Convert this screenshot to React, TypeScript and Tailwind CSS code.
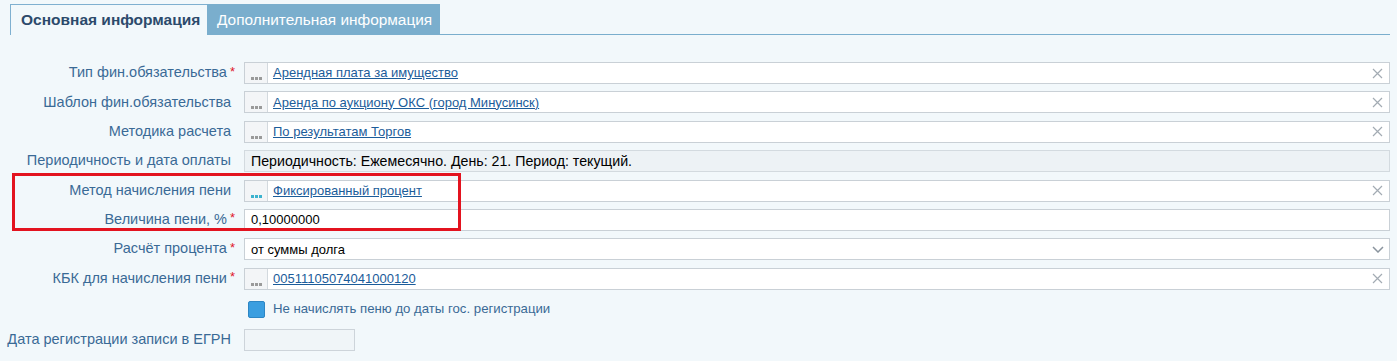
import React from "react";

const F = { fontFamily: '"Liberation Sans", Arial, sans-serif' };

function Dots({ active = false }: { active?: boolean }) {
  const c = active ? "bg-[#3bb3cf]" : "bg-[#9a9a9a]";
  return (
    <div className="flex h-full w-[23px] shrink-0 items-end justify-center border-r border-[#d3d9de] bg-[#f3f5f7] pb-[3px]">
      <div className="flex gap-[1px]">
        <span className={`block h-[3px] w-[3px] ${c}`} />
        <span className={`block h-[3px] w-[3px] ${c}`} />
        <span className={`block h-[3px] w-[3px] ${c}`} />
      </div>
    </div>
  );
}

function XIcon() {
  return (
    <svg width="11" height="11" viewBox="0 0 11 11" className="mr-[6px] shrink-0">
      <path d="M1 1 L10 10 M10 1 L1 10" stroke="#a3abb3" strokeWidth="1.2" fill="none" />
    </svg>
  );
}

function Chevron() {
  return (
    <div className="flex h-full w-[22px] shrink-0 items-center justify-center">
      <svg width="12" height="7" viewBox="0 0 12 7">
        <path d="M1 1 L6 6 L11 1" stroke="#8a949e" strokeWidth="1.5" fill="none" />
      </svg>
    </div>
  );
}

function Label({ text, req = false }: { text: string; req?: boolean }) {
  return (
    <div className="flex w-[234px] shrink-0 items-center justify-end whitespace-nowrap pr-[13px] text-[14.5px] text-[#3a6a96]">
      <span>{text}</span>
      {req ? <span className="ml-[3px] -mr-[4px] -mt-[4px] text-[13px] leading-none text-[#e0182a]">*</span> : null}
    </div>
  );
}

function LookupRow({ label, req, value, active }: { label: string; req?: boolean; value: string; active?: boolean }) {
  return (
    <div className="flex h-[22px] items-center">
      <Label text={label} req={req} />
      <div className="flex h-[22px] flex-1 items-center border border-[#c9d0d6] bg-white">
        <Dots active={active} />
        <a className="ml-[5px] flex-1 text-[13px] text-[#1b5c9a] underline" href="#">
          {value}
        </a>
        <XIcon />
      </div>
    </div>
  );
}

export default function App() {
  return (
    <div style={F} className="relative h-[361px] w-[1397px] overflow-hidden bg-[#f2f8fb] pl-[10px] pr-[7px] pt-[4px]">
      {/* tabs */}
      <div className="flex h-[31px] items-stretch">
        <div className="flex w-[197px] items-center border-l border-t border-[#7fb0d0] pl-[10px] text-[15.5px] font-bold text-[#2c4a6b]">
          Основная информация
        </div>
        <div className="flex w-[233px] items-center bg-[#7aaecd] pl-[10px] text-[15.4px] text-white">
          Дополнительная информация
        </div>
        <div className="flex-1 border-b border-[#7aaecd]" />
      </div>

      <div className="mt-[27px] flex flex-col gap-[7.4px]">
        <LookupRow label="Тип фин.обязательства" req value="Арендная плата за имущество" />
        <LookupRow label="Шаблон фин.обязательства" value="Аренда по аукциону ОКС (город Минусинск)" />
        <LookupRow label="Методика расчета" value="По результатам Торгов" />
        <div className="flex h-[22px] items-center">
          <Label text="Периодичность и дата оплаты" />
          <div className="flex h-[22px] flex-1 items-center border border-[#d3dadf] bg-[#edf2f5] pl-[6px] text-[14.2px] text-black">
            Периодичность: Ежемесячно. День: 21. Период: текущий.
          </div>
        </div>
        <LookupRow label="Метод начисления пени" value="Фиксированный процент" active />
        <div className="flex h-[22px] items-center">
          <Label text="Величина пени, %" req />
          <div className="flex h-[22px] flex-1 items-center border border-[#c9d0d6] bg-white pl-[6px] text-[13px] text-black">
            0,10000000
          </div>
        </div>
        <div className="flex h-[22px] items-center">
          <Label text="Расчёт процента" req />
          <div className="flex h-[22px] flex-1 items-center border border-[#c9d0d6] bg-white pl-[6px] text-[13px] text-black">
            <span className="flex-1">от суммы долга</span>
            <Chevron />
          </div>
        </div>
        <LookupRow label="КБК для начисления пени" req value="00511105074041000120" />
        <div className="flex h-[24px] items-center">
          <div className="w-[238px] shrink-0" />
          <div className="h-[17px] w-[17px] rounded-[2px] border border-[#2d86c4] bg-[#3a9ee0]" />
          <span className="ml-[8px] text-[13.2px] text-[#3a6a96]">Не начислять пеню до даты гос. регистрации</span>
        </div>
        <div className="flex h-[22px] items-center">
          <Label text="Дата регистрации записи в ЕГРН" />
          <div className="h-[22px] w-[111px] border border-[#cdd4da] bg-[#f0f5f8]" />
        </div>
      </div>

      {/* annotation box */}
      <div className="absolute left-[12px] top-[173px] h-[58px] w-[449px] border-[3px] border-[#e3131f]" />
    </div>
  );
}
